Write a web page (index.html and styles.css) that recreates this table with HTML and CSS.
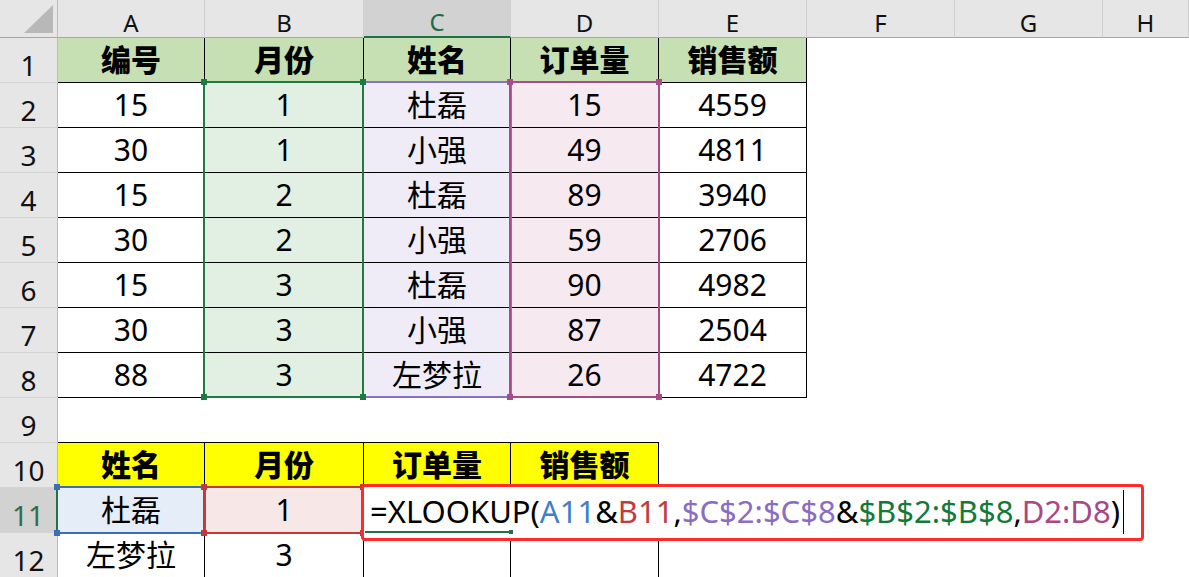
FILE: index.html
```html
<!DOCTYPE html>
<html lang="zh-CN">
<head>
<meta charset="utf-8">
<title>XLOOKUP</title>
<link rel="stylesheet" href="styles.css">
</head>
<body>
<div class="sheet">
  <div class="corner"><svg width="58" height="38" viewBox="0 0 58 38"><polygon points="53,5 53,33 24,33" fill="#b8b8b8"/></svg></div>
  <div class="ch">A</div><div class="ch">B</div><div class="ch ch-sel">C</div><div class="ch">D</div><div class="ch">E</div><div class="ch">F</div><div class="ch">G</div><div class="ch">H</div>

  <div class="rh">1</div><div class="c bd hg">编号</div><div class="c bd hg">月份</div><div class="c bd hg">姓名</div><div class="c bd hg">订单量</div><div class="c bd hg">销售额</div><div class="c"></div><div class="c"></div><div class="c"></div>
  <div class="rh">2</div><div class="c bd">15</div><div class="c bd fb">1</div><div class="c bd fc">杜磊</div><div class="c bd fd">15</div><div class="c bd">4559</div><div class="c"></div><div class="c"></div><div class="c"></div>
  <div class="rh">3</div><div class="c bd">30</div><div class="c bd fb">1</div><div class="c bd fc">小强</div><div class="c bd fd">49</div><div class="c bd">4811</div><div class="c"></div><div class="c"></div><div class="c"></div>
  <div class="rh">4</div><div class="c bd">15</div><div class="c bd fb">2</div><div class="c bd fc">杜磊</div><div class="c bd fd">89</div><div class="c bd">3940</div><div class="c"></div><div class="c"></div><div class="c"></div>
  <div class="rh">5</div><div class="c bd">30</div><div class="c bd fb">2</div><div class="c bd fc">小强</div><div class="c bd fd">59</div><div class="c bd">2706</div><div class="c"></div><div class="c"></div><div class="c"></div>
  <div class="rh">6</div><div class="c bd">15</div><div class="c bd fb">3</div><div class="c bd fc">杜磊</div><div class="c bd fd">90</div><div class="c bd">4982</div><div class="c"></div><div class="c"></div><div class="c"></div>
  <div class="rh">7</div><div class="c bd">30</div><div class="c bd fb">3</div><div class="c bd fc">小强</div><div class="c bd fd">87</div><div class="c bd">2504</div><div class="c"></div><div class="c"></div><div class="c"></div>
  <div class="rh">8</div><div class="c bd">88</div><div class="c bd fb">3</div><div class="c bd fc">左梦拉</div><div class="c bd fd">26</div><div class="c bd">4722</div><div class="c"></div><div class="c"></div><div class="c"></div>
  <div class="rh">9</div><div class="c bb"></div><div class="c bb"></div><div class="c bb"></div><div class="c bb"></div><div class="c"></div><div class="c"></div><div class="c"></div><div class="c"></div>
  <div class="rh">10</div><div class="c bd hy">姓名</div><div class="c bd hy">月份</div><div class="c bd hy">订单量</div><div class="c bd hy">销售额</div><div class="c"></div><div class="c"></div><div class="c"></div><div class="c"></div>
  <div class="rh rh-sel">11</div><div class="c bd fa11">杜磊</div><div class="c bd fb11">1</div><div class="c bd"></div><div class="c bd"></div><div class="c"></div><div class="c"></div><div class="c"></div><div class="c"></div>
  <div class="rh">12</div><div class="c bd">左梦拉</div><div class="c bd">3</div><div class="c bd"></div><div class="c bd"></div><div class="c"></div><div class="c"></div><div class="c"></div><div class="c"></div>

  <div class="range r-purple rng-c"></div>
  <div class="range r-magenta rng-d"><i class="h tl"></i><i class="h tr"></i><i class="h bl"></i><i class="h br"></i></div>
  <div class="range r-green rng-b"><i class="h tl"></i><i class="h tr"></i><i class="h bl"></i><i class="h br"></i></div>
  <div class="range r-blue rng-a11"><i class="h tl"></i><i class="h bl"></i></div>
  <div class="range r-red rng-b11"><i class="h tl"></i><i class="h tr"></i><i class="h bl"></i><i class="h br"></i></div>

  <div class="editor"><span class="k">=XLOOKUP(</span><span class="t-blue">A11</span><span class="k">&amp;</span><span class="t-red">B11</span><span class="k">,</span><span class="t-purple">$C$2:$C$8</span><span class="k">&amp;</span><span class="t-green">$B$2:$B$8</span><span class="k">,</span><span class="t-magenta">D2:D8</span><span class="k">)</span><span class="caret"></span></div>
  <div class="active-line"><i class="ah"></i></div>
</div>
</body>
</html>
```
FILE: styles.css
```css
html, body {
  margin: 0;
  padding: 0;
  background: #ffffff;
  overflow: hidden;
}

.sheet {
  position: relative;
  display: grid;
  grid-template-columns: 58px 147px 159px 147px 148px 148px 148px 148px 1fr;
  grid-template-rows: 38px repeat(12, 45px);
  width: 1189px;
  height: 577px;
  font-family: "Noto Sans", "Noto Sans CJK SC", sans-serif;
  color: #000;
}

.corner {
  background: #e6e6e6;
  box-sizing: border-box;
  border-right: 1px solid #bdbdbd;
  border-bottom: 1px solid #a6a6a6;
  position: relative;
}
.corner svg { display: block; }

.ch {
  box-sizing: border-box;
  background: #e6e6e6;
  border-right: 1px solid #cfcfcf;
  border-bottom: 1px solid #a6a6a6;
  display: flex;
  align-items: center;
  justify-content: center;
  padding-top: 8px;
  font-size: 24px;
  line-height: 1;
  color: #111;
}
.ch-sel {
  background: #d2d2d2;
  color: #1f6b43;
  border-bottom: 2px solid #217346;
}

.rh {
  box-sizing: border-box;
  background: #e6e6e6;
  border-right: 1px solid #bdbdbd;
  border-bottom: 1px solid #d4d4d4;
  display: flex;
  align-items: center;
  justify-content: center;
  padding-top: 10px;
  font-size: 28px;
  line-height: 1;
  color: #111;
}
.rh-sel {
  background: #d2d2d2;
  color: #2f6d4c;
  border-right: 2px solid #217346;
}

.c {
  box-sizing: border-box;
  display: flex;
  align-items: center;
  justify-content: center;
  font-size: 30px;
  line-height: 1;
  white-space: nowrap;
}
.bd {
  border-right: 1px solid #000;
  border-bottom: 1px solid #000;
}
.bb {
  border-bottom: 1px solid #000;
}
.hg {
  background: #c6e0b4;
  font-weight: 900;
}
.hy {
  background: #ffff00;
  font-weight: 900;
}
.fb { background: #e2efe3; }
.fc { background: #efecf8; }
.fd { background: #f7e9f0; }
.fa11 { background: #e5edf8; }
.fb11 { background: #f8e7e7; }

/* reference range highlights */
.range {
  position: absolute;
  box-sizing: border-box;
  border: 2px solid;
}
.r-green { border-color: #1e7a3e; color: #1e7a3e; }
.r-purple { border-color: #8a70bf; color: #8a70bf; }
.r-magenta { border-color: #a84b88; color: #a84b88; }
.r-blue { border-color: #3a6fb5; color: #3a6fb5; }
.r-red { border-color: #c0393b; color: #c0393b; }

.rng-b { left: 203px; top: 81px; width: 161px; height: 317px; }
.rng-c { left: 362px; top: 81px; width: 150px; height: 317px; }
.rng-d { left: 509px; top: 81px; width: 151px; height: 317px; }
.rng-a11 { left: 56px; top: 486px; width: 150px; height: 48px; border-left: none; }
.rng-b11 { left: 203px; top: 486px; width: 161px; height: 48px; }

.h {
  position: absolute;
  width: 6px;
  height: 6px;
  background: currentColor;
}
.h.tl { left: -4px; top: -4px; }
.h.tr { right: -4px; top: -4px; }
.h.bl { left: -4px; bottom: -4px; }
.h.br { right: -4px; bottom: -4px; }
.rng-a11 .h.tl, .rng-a11 .h.bl { left: -2px; }

.editor {
  position: absolute;
  left: 361px;
  top: 484px;
  width: 783px;
  height: 57px;
  box-sizing: border-box;
  border: 3px solid #ff2a2a;
  border-radius: 4px;
  background: #ffffff;
  display: flex;
  align-items: center;
  padding-left: 6px;
  padding-bottom: 2px;
  font-size: 31px;
  line-height: 1;
  white-space: nowrap;
  z-index: 2;
}
.k { color: #000; }
.t-blue { color: #3f7fcb; }
.t-red { color: #c23b3e; }
.t-purple { color: #8a6cc2; }
.t-green { color: #137a37; }
.t-magenta { color: #a84886; }
.caret {
  display: inline-block;
  width: 1px;
  height: 44px;
  background: #000;
  margin-left: 3px;
  align-self: center;
}

.active-line {
  position: absolute;
  left: 365px;
  top: 531px;
  width: 144px;
  height: 2px;
  background: #217346;
  z-index: 3;
}
.ah {
  position: absolute;
  right: -4px;
  top: -1px;
  width: 4px;
  height: 4px;
  background: #217346;
}
```
